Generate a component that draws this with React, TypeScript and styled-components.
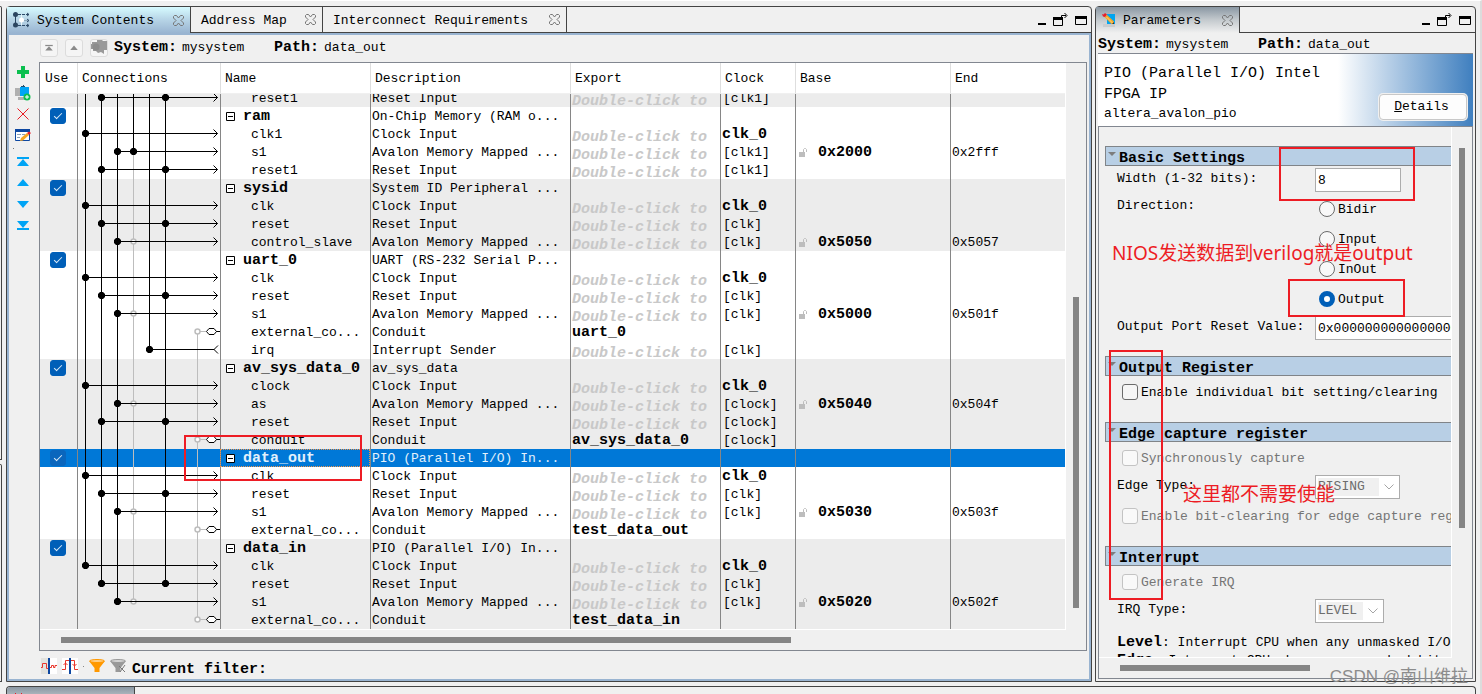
import React, { useLayoutEffect, useRef } from "react";
import styled, { createGlobalStyle, css } from "styled-components";

const mono = `"Liberation Mono", "Noto Sans CJK SC", monospace`;
const dark = "#444444";
const frame = "#828790";
const face = "#f0f0f0";

const GlobalStyle = createGlobalStyle`
  *, *::before, *::after { box-sizing: border-box; }
  body {
    margin: 0;
    background: ${face};
    color: #000;
    font: 13px/18px ${mono};
  }
  button, input, select { font: inherit; color: inherit; margin: 0; }
`;

/* ---------- shell ---------- */

const Page = styled.div`
  position: relative;
  display: flex;
  flex-direction: column;
  gap: 4px;
  height: 100vh;
  min-height: 480px;
  padding-top: 5px;
  overflow: hidden;
  border-top: 1px solid #fff;
  border-right: 2px solid #dcdcdc;
`;

const Workspace = styled.div`
  flex: 1;
  min-height: 0;
  display: grid;
  grid-template-columns: 2px minmax(0, 1fr) 381px;
  column-gap: 3px;
  padding-right: 4px;
`;

const Sliver = styled.div`
  display: flex;
  flex-direction: column;
  gap: 4px;
`;

const SliverPane = styled.div<{ $grow: number }>`
  flex: ${(p) => p.$grow};
  border: 1px solid ${dark};
  border-left: 0;
  border-top-right-radius: 2px;
`;

const Panel = styled.section<{ $lead?: boolean }>`
  display: flex;
  flex-direction: column;
  min-width: 0;
  min-height: 0;
  border: 1px solid ${dark};
  border-radius: 4px 4px 0 0;
  margin-left: ${(p) => (p.$lead ? "1px" : "0")};
`;

const TabStrip = styled.div`
  display: flex;
  flex: none;
  height: 26px;
`;

const TabItem = styled.div<{ $w: number; $tone?: "blue" | "gray" }>`
  display: flex;
  align-items: center;
  flex: none;
  width: ${(p) => p.$w}px;
  padding: 0 6px 0 ${(p) => (p.$tone ? 6 : 10)}px;
  border-right: 1px solid ${dark};
  ${(p) =>
    p.$tone === "blue"
      ? css`background: linear-gradient(#d6fbff, #b9d7e8 45%, #99b4d1);`
      : p.$tone === "gray"
      ? css`background: linear-gradient(#8a97a3, #c4cace 50%, ${face});`
      : css`border-bottom: 1px solid ${dark};`}
  svg { flex: none; }
`;

const TabLabel = styled.button`
  padding: 2px 0 0;
  border: 0;
  background: none;
  margin-left: 7px;
  white-space: nowrap;
  &:first-child { margin-left: 0; }
`;

const IconButton = styled.button`
  display: grid;
  place-items: center;
  padding: 0;
  border: 0;
  background: none;
`;

const TabClose = styled(IconButton)`
  margin-left: auto;
`;

const WindowControls = styled.div`
  flex: 1;
  display: flex;
  justify-content: flex-end;
  align-items: center;
  gap: 7px;
  padding-right: 4px;
  border-bottom: 1px solid ${dark};
`;

const PathBar = styled.div`
  display: flex;
  align-items: center;
  gap: 5px;
  white-space: nowrap;
`;

const Strong = styled.b`
  font-size: 15px;
  font-weight: 700;
`;

const PathValue = styled.span`
  min-width: 87px;
`;

/* ---------- system contents ---------- */

const ContentsBody = styled.div`
  flex: 1;
  min-height: 0;
  display: grid;
  grid-template: 27px minmax(0, 1fr) 28px / 30px minmax(0, 1fr);
  border: 2px solid #99b4d1;
  padding-right: 2px;
`;

const TopTools = styled.div`
  grid-column: 2;
  display: flex;
  align-items: center;
  gap: 7px;
  padding: 0 0 2px 1px;
`;

const ToolButton = styled(IconButton)`
  width: 18px;
  height: 18px;
  border: 1px solid #dcdcdc;
  border-radius: 3px;
  background: #f5f5f5;
`;

const ToolPath = styled(PathBar)`
  margin-left: -1px;
`;

const SideTools = styled.div`
  display: flex;
  flex-direction: column;
  align-items: center;
  gap: 5px;
  padding-top: 2px;
  padding-right: 2px;
  svg { display: block; }
`;

const SideDivider = styled.span`
  width: 1px;
  height: 1px;
  margin: 0 19px 0 0;
  background: #777;
`;

const TableFrame = styled.div`
  display: grid;
  grid-template: minmax(0, 1fr) 20px / minmax(0, 1fr) 20px;
  border: 1px solid ${frame};
`;

const TableView = styled.div`
  overflow: auto;
  scrollbar-width: none;
  border-right: 1px solid #fff;
  border-bottom: 1px solid #fff;
`;

const Table = styled.table`
  width: 100%;
  table-layout: fixed;
  border-collapse: separate;
  border-spacing: 0;
`;

const HeadCell = styled.th`
  position: sticky;
  top: 0;
  z-index: 1;
  height: 31px;
  padding: 2px 0 0 4px;
  background: #fff;
  border-left: 1px solid #dedede;
  border-bottom: 1px solid #f0f0f0;
  text-align: left;
  font-weight: 400;
  &:first-child { border-left: 0; padding-left: 5px; }
`;

const Row = styled.tr<{ $shade: boolean; $selected?: boolean }>`
  height: 18px;
  background: ${(p) => (p.$selected ? "#0078d7" : p.$shade ? "#ececec" : "#fff")};
  color: ${(p) => (p.$selected ? "#e3f1fc" : "#000")};
`;

const Cell = styled.td`
  height: 18px;
  padding: 2px 0 0 1px;
  border-left: 1px solid #868686;
  overflow: hidden;
  white-space: nowrap;
  line-height: 16px;
  svg { display: block; }
`;

const UseCell = styled(Cell)`
  border-left: 0;
  padding: 1px 0 1px 10px;
`;

const WireCell = styled(Cell)`
  padding: 0;
`;

const NameCell = styled(Cell)<{ $focus?: boolean }>`
  padding: 0;
  ${(p) => p.$focus && css`outline: 1px dotted #f0944a; outline-offset: -1px;`}
`;

const NameLine = styled.div<{ $child?: boolean }>`
  display: flex;
  align-items: center;
  gap: 7px;
  height: 18px;
  padding-top: 2px;
  padding-left: ${(p) => (p.$child ? 30 : 5)}px;
`;

const Expander = styled(IconButton)`
  width: 10px;
  height: 10px;
`;

const ExportHint = styled.i`
  display: block;
  height: 16px;
  padding-top: 3px;
  font-size: 15px;
  font-weight: 700;
  color: #c8c8c8;
`;

const StrongLine = styled(Strong)`
  display: block;
  height: 16px;
`;

const ClockText = styled.span`
  padding-left: 1px;
`;

const BaseLine = styled.div`
  display: flex;
  align-items: center;
  gap: 11px;
  height: 16px;
  padding-left: 2px;
  svg { margin-bottom: 2px; }
`;

const VScroll = styled.div<{ $top: number; $bottom: number }>`
  display: flex;
  justify-content: center;
  padding: ${(p) => p.$top}px 0 ${(p) => p.$bottom}px;
`;

const HScroll = styled.div<{ $left: number; $right: number }>`
  display: flex;
  align-items: center;
  padding: 0 ${(p) => p.$right}px 0 ${(p) => p.$left}px;
`;

const VThumb = styled.div`
  width: 6px;
  background: #858585;
`;

const HThumb = styled.div`
  height: 6px;
  width: 100%;
  background: #858585;
`;

const FilterBar = styled.div`
  grid-column: 1 / -1;
  display: flex;
  align-items: center;
  gap: 5px;
  padding: 2px 0 0 32px;
`;

const FilterDot = styled.span`
  width: 1px;
  height: 1px;
  background: #888;
`;

const FilterLabel = styled(Strong)`
  margin: 7px 0 0 1px;
`;

/* ---------- controls ---------- */

const CheckBox = styled.input.attrs({ type: "checkbox" })<{ $dim?: boolean }>`
  appearance: none;
  display: grid;
  place-items: center;
  flex: none;
  width: 16px;
  height: 16px;
  border: 1px solid #6b6b6b;
  border-radius: 3px;
  background: #f6f6f6;
  &:disabled { border-color: #c3c3c3; background: #f9f9f9; }
  &:checked {
    border-color: ${(p) => (p.$dim ? "#0a66bd" : "#005fb8")};
    background: ${(p) => (p.$dim ? "#0a66bd" : "#005fb8")};
  }
  &:checked::after {
    content: "";
    width: 8px;
    height: 4px;
    border: solid #dcebf8;
    border-width: 0 0 1px 1px;
    transform: translateY(-1px) rotate(-45deg);
  }
`;

const Radio = styled.input.attrs({ type: "radio" })`
  appearance: none;
  flex: none;
  width: 16px;
  height: 16px;
  border: 1px solid #6b6b6b;
  border-radius: 50%;
  background: #f8f8f8;
  &:checked { border: 5px solid #005fb8; background: #fff; }
`;

const TextBox = styled.input.attrs({ type: "text" })<{ $w: number }>`
  width: ${(p) => p.$w}px;
  height: 24px;
  padding: 0 2px;
  border: 1px solid #acacac;
  border-radius: 0;
  background: #fff;
`;

const SelectBox = styled.span<{ $w: number }>`
  display: flex;
  align-items: center;
  width: ${(p) => p.$w}px;
  height: 24px;
  padding: 2px 5px 2px 2px;
  border: 1px solid #acacac;
  background: #fff;
  svg { flex: none; margin-left: 5px; }
`;

const Select = styled.select`
  appearance: none;
  flex: 1;
  min-width: 0;
  height: 18px;
  padding: 0;
  border: 0;
  border-radius: 0;
  background: ${face};
  &:disabled { color: #6d6d6d; opacity: 1; }
`;

/* ---------- parameters ---------- */

const ParamsPathBar = styled(PathBar)`
  flex: none;
  height: 21px;
  margin: 0 2px;
  padding-top: 4px;
  border-bottom: 1px solid ${frame};
`;

const ParamsHeader = styled.header`
  flex: none;
  display: flex;
  justify-content: space-between;
  align-items: flex-end;
  height: 72px;
  margin: 0 2px;
  padding: 0 6px 3px;
  background: linear-gradient(to right, #fff 64%, #3f7fbf);
`;

const ParamsTitle = styled.h1`
  width: 220px;
  margin: 0;
  font-size: 15px;
  font-weight: 400;
  line-height: 21px;
`;

const DetailsButton = styled.button`
  width: 88px;
  height: 26px;
  margin-bottom: 3px;
  padding: 0 3px 0 0;
  border: 1px solid #c8c8c8;
  border-radius: 4px;
  background: #fdfdfd;
  box-shadow: 0 0 0 1px ${face};
`;

const ParamsPane = styled.div`
  flex: 1;
  min-height: 0;
  display: grid;
  grid-template: minmax(0, 1fr) 20px / minmax(0, 1fr) 20px;
  margin: 0 2px 2px;
  border: 1px solid ${frame};
`;

const ParamsView = styled.form`
  overflow: hidden;
  padding: 19px 0 0 6px;
  border-right: 1px solid #fff;
  border-bottom: 1px solid #fff;
`;

const Group = styled.section`
  min-width: 460px;
`;

const GroupHeader = styled.h2`
  display: flex;
  gap: 3px;
  height: 20px;
  margin: 0;
  padding: 5px 0 0 2px;
  border: 1px solid #808488;
  background: #b8cfe5;
  font-size: 15px;
  line-height: 14px;
`;

const GroupBody = styled.div`
  display: flex;
  flex-direction: column;
  gap: 3px;
  padding: 2px 0 16px 12px;
`;

const Field = styled.div`
  display: grid;
  grid-template-columns: 198px auto;
  justify-content: start;
  align-items: start;
`;

const FieldLabel = styled.label`
  padding-top: 2px;
`;

const RadioList = styled.div`
  display: flex;
  flex-direction: column;
  gap: 6px;
  padding: 2px 0 2px 4px;
`;

const Choice = styled.label<{ $off?: boolean }>`
  display: flex;
  align-items: center;
  gap: 3px;
  height: 24px;
  white-space: nowrap;
  color: ${(p) => (p.$off ? "#757575" : "#000")};
`;

const ChoiceText = styled.span`
  padding-top: 2px;
`;

const CheckChoice = styled(Choice)`
  height: 28px;
  padding-left: 5px;
`;

const Help = styled.p`
  margin: 8px 0 0;
  white-space: nowrap;
`;

/* ---------- annotations ---------- */

const MarkBox = styled.div<{ $x: number; $y: number; $w: number; $h: number }>`
  position: absolute;
  left: ${(p) => p.$x}px;
  top: ${(p) => p.$y}px;
  width: ${(p) => p.$w}px;
  height: ${(p) => p.$h}px;
  border: 2px solid #ed1c24;
  pointer-events: none;
`;

const MarkLayer = styled.div<{ $side: "left" | "right" }>`
  position: absolute;
  top: -1px;
  ${(p) => (p.$side === "left" ? "left: 0;" : "right: 0; width: 385px;")}
  height: 0;
`;

const MarkText = styled.div<{ $x: number; $y: number }>`
  position: absolute;
  left: ${(p) => p.$x}px;
  top: ${(p) => p.$y}px;
  color: #ed1c24;
  font: 19px/26px "Noto Sans", "Noto Sans CJK SC", sans-serif;
  white-space: nowrap;
`;

const Watermark = styled.div`
  position: absolute;
  right: 12px;
  bottom: 4px;
  color: #8c8c8c;
  font: 17px/26px "Liberation Sans", "Noto Sans CJK SC", sans-serif;
  white-space: nowrap;
`;

const Dock = styled.section`
  flex: none;
  height: 8px;
  margin: 0 4px 0 6px;
  overflow: hidden;
  border: 1px solid ${dark};
  border-bottom: 0;
  border-radius: 4px 4px 0 0;
`;

const DockTab = styled.div`
  width: 128px;
  height: 26px;
  padding: 5px 0 0 7px;
  border-right: 1px solid ${dark};
  background: linear-gradient(#8a97a3, #c4cace 50%, ${face});
  svg { display: block; }
`;

/* ---------- icons ---------- */

const CloseIcon = () => (
  <svg width="11" height="11" viewBox="0 0 11 11" fill="none" stroke="#757575">
    <path d="M1.5.5h2l2 2.500 2-2.500h2l1 1v1.500l-2.500 2.500 2.500 2.500v1.500l-1 1h-2l-2-2.500-2 2.500h-2l-1-1v-1.500l2.500-2.500-2.500-2.500v-1.500z" />
  </svg>
);

const SystemIcon = () => (
  <svg width="17" height="16" viewBox="0 0 17 16" fill="none">
    <path d="M2.500 3v10" stroke="#2b4560" />
    <path d="M5 2.500h11M5 13.500h11" stroke="#2e4a68" strokeDasharray="3 1" />
    <path d="M8.500 3v10" stroke="#e8f4f8" />
    <path d="M11 8.500h5" stroke="#8fa9bd" />
    <circle cx="2.500" cy="2.500" r="2.500" fill="#2b4560" />
    <circle cx="2.500" cy="13" r="2.500" fill="#2b4560" />
    <circle cx="8.500" cy="8" r="2.500" fill="#fff" />
    <path d="M14 1l2 1.500-2 1.500M14 7l2 1.500-2 1.500M14 12l2 1.500-2 1.500" stroke="#2e4a68" />
  </svg>
);

const ParamsIcon = () => (
  <svg width="14" height="15" viewBox="0 0 14 15">
    <path d="M5 1h8v10H5z" fill="#00a4ef" />
    <path d="M1 11h12v3H1z" fill="#c9ccce" />
    <path d="M2.500 4L5 2l7 6.500V11H9.500z" fill="#f7a823" />
    <path d="M4.500 4l6 6" stroke="#fbd08a" />
    <path d="M0 1l1.500.5L3 0l2 1.500L3 4 1 3.500z" fill="#e8202a" />
    <path d="M10 11l2-2v2z" fill="#333" />
  </svg>
);

const MinimizeIcon = () => (
  <svg width="8" height="14" viewBox="0 0 8 14"><path d="M0 10h8v2H0z" /></svg>
);

const FloatIcon = () => (
  <svg width="15" height="14" viewBox="0 0 15 14" fill="none" stroke="#000">
    <path d="M.5 4.500h9v8h-9z" />
    <path d="M0 5.500h10" strokeWidth="3" />
    <path d="M8.500 6V2.500H13M11.500 0l2.500 2.500L11.500 5" />
  </svg>
);

const MaximizeIcon = () => (
  <svg width="12" height="14" viewBox="0 0 12 14" fill="none" stroke="#000">
    <path d="M.5 3.500h11v8H.5z" />
    <path d="M0 4.500h12" strokeWidth="3" />
  </svg>
);

const TriIcon = ({ up, bar, color = "#00a4f5", small }: { up?: boolean; bar?: boolean; color?: string; small?: boolean }) => (
  <svg width={small ? 8 : 12} height={small ? 10 : 16} viewBox="0 0 12 16" fill={color}>
    <g transform={up ? undefined : "matrix(1 0 0 -1 0 16)"}>
      {bar && <path d="M0 3h12v2H0z" />}
      <path d={bar ? "M6 5l6 7H0z" : "M6 4l6 7H0z"} />
    </g>
  </svg>
);

const CopyIcon = () => (
  <svg width="16" height="15" viewBox="0 0 16 15" fill="#999">
    <path d="M1 2h5V0h5l1 1h4v9h-3v4l-3-2-3 1-2-2H2V9H0V4h1z" />
    <circle cx="5" cy="7" r="3.500" fill="#8c8c8c" />
  </svg>
);

const AddIcon = () => (
  <svg width="12" height="16" viewBox="0 0 12 16"><path d="M4 2h4v4h4v4H8v4H4v-4H0V6h4z" fill="#0bbf4f" /></svg>
);

const AddBlockIcon = () => (
  <svg width="16" height="16" viewBox="0 0 16 16">
    <path d="M0 3h5v8H0zM3 12h7v3H3z" fill="#b0b0b0" />
    <path d="M5 2h9v9H5z" fill="#00a4f5" />
    <path d="M6 2V1h2V0h1v1h1v1z" fill="#24506e" />
    <circle cx="12" cy="12" r="3.500" fill="#0bbf4f" />
    <path d="M10 12h4M12 10v4" stroke="#fff" />
  </svg>
);

const RemoveIcon = () => (
  <svg width="12" height="16" viewBox="0 0 12 16"><path d="M.5 2.500l11 11M11.500 2.500l-11 11" stroke="#e81c24" fill="none" /></svg>
);

const EditIcon = () => (
  <svg width="16" height="16" viewBox="0 0 16 16">
    <path d="M.5 2.500h14v11H.5z" fill="#fff" stroke="#0d47a1" />
    <path d="M0 2h15v3H0z" fill="#0d47a1" />
    <path d="M2 7.500h4M2 10.500h3M7 7.500h3" stroke="#8aa0b8" />
    <path d="M5 14l1-3 6-5 2 2-6 5.500z" fill="#f5a623" />
    <path d="M12 6l2-1.500L16 6l-2 2z" fill="#e8202a" />
  </svg>
);

const Wave1Icon = () => (
  <svg width="16" height="16" viewBox="0 0 16 16" fill="none">
    <path d="M0 0h7v16H0z" fill="#e2e2de" /><path d="M9 0h7v16H9z" fill="#fff" />
    <path d="M0 9.500h1.500v-4h4v5H7M9 9.500h1.500v-2h2v2H14v-2h2" stroke="#e8362c" />
    <path d="M7 0h2v16H7z" fill="#0d47a1" />
  </svg>
);

const Wave2Icon = () => (
  <svg width="16" height="16" viewBox="0 0 16 16" fill="none">
    <path d="M0 0h16v16H0z" fill="#fff" />
    <path d="M0 11.500h3.500v-9h9v9H16M1.500 7L3.500 5l2 2M10.500 6l2 2 2-2" stroke="#e8362c" />
    <path d="M7 0h2v16H7z" fill="#0d47a1" />
  </svg>
);

const FunnelIcon = ({ off }: { off?: boolean }) => (
  <svg width="16" height="16" viewBox="0 0 16 16">
    <path d="M0 3l5.500 7v4h5v-4L16 3z" fill={off ? "#999" : "#ff9800"} />
    <ellipse cx="8" cy="3" rx="7.500" ry="1.500" fill={off ? "#d5d5d5" : "#ffd08a"} stroke={off ? "#999" : "#ff9800"} />
    {off && <path d="M9 8l6 6M15 7l-5 7" stroke="#777" />}
  </svg>
);

const LockIcon = () => (
  <svg width="8" height="9" viewBox="0 0 8 9" fill="none">
    <path d="M0 4h6v5H0z" fill="#bdbdbd" />
    <path d="M4.500 4V1.500L5.500.5h1l1 1V4" stroke="#bdbdbd" />
  </svg>
);

const ChevronIcon = () => (
  <svg width="10" height="6" viewBox="0 0 10 6" fill="none" stroke="#a5a5a5"><path d="M.5.5L5 5 9.500.5" /></svg>
);

const DisclosureIcon = () => (
  <svg width="8" height="4" viewBox="0 0 8 4" fill="#7d7d7d"><path d="M0 0h8L4 4z" /></svg>
);

const MinusBox = () => (
  <svg width="10" height="10" viewBox="0 0 10 10"><path d="M.5.5h8v8h-8z" fill="#fff" stroke="#000" /><path d="M2 4.500h5" stroke="#000" /></svg>
);

/* ---------- table data ---------- */

const LANES = { clk: 7, rst: 23, bus: 39, bus2: 55, irq: 71, dbg: 87, ext: 119 };
type Lane = keyof typeof LANES;
type Wire = "clock" | "reset" | "bus" | "busBoth" | "conduit" | "irq";

type RowData = {
  name: string;
  desc: string;
  root?: boolean;
  shade?: boolean;
  selected?: boolean;
  wire?: Wire;
  export?: string;
  clock?: string;
  base?: string;
  end?: string;
};

const AV = "Avalon Memory Mapped ...";
const clk = (name: string): RowData => ({ name, desc: "Clock Input", wire: "clock", clock: "clk_0" });
const rst = (name: string, clock: string): RowData => ({ name, desc: "Reset Input", wire: "reset", clock });
const bus = (name: string, clock: string, base: string, end: string, wire: Wire = "bus"): RowData => ({
  name, desc: AV, wire, clock, base, end,
});
const conduit = (name: string, exp: string, clock?: string): RowData => ({
  name, desc: "Conduit", wire: "conduit", export: exp, clock,
});

const groups: RowData[][] = [
  [rst("reset1", "[clk1]")],
  [{ name: "ram", desc: "On-Chip Memory (RAM o...", root: true }, clk("clk1"), bus("s1", "[clk1]", "0x2000", "0x2fff", "busBoth"), rst("reset1", "[clk1]")],
  [{ name: "sysid", desc: "System ID Peripheral ...", root: true }, clk("clk"), rst("reset", "[clk]"), bus("control_slave", "[clk]", "0x5050", "0x5057")],
  [
    { name: "uart_0", desc: "UART (RS-232 Serial P...", root: true }, clk("clk"), rst("reset", "[clk]"),
    bus("s1", "[clk]", "0x5000", "0x501f"), conduit("external_co...", "uart_0"),
    { name: "irq", desc: "Interrupt Sender", wire: "irq", clock: "[clk]" },
  ],
  [
    { name: "av_sys_data_0", desc: "av_sys_data", root: true }, clk("clock"), bus("as", "[clock]", "0x5040", "0x504f"),
    rst("reset", "[clock]"), conduit("conduit", "av_sys_data_0", "[clock]"),
  ],
  [
    { name: "data_out", desc: "PIO (Parallel I/O) In...", root: true, selected: true }, clk("clk"), rst("reset", "[clk]"),
    bus("s1", "[clk]", "0x5030", "0x503f"), conduit("external_co...", "test_data_out"),
  ],
  [
    { name: "data_in", desc: "PIO (Parallel I/O) In...", root: true }, clk("clk"), rst("reset", "[clk]"),
    bus("s1", "[clk]", "0x5020", "0x502f"), conduit("external_co...", "test_data_in"),
  ],
];

const rows: RowData[] = groups.flatMap((g, i) => g.map((r) => ({ ...r, shade: i % 2 === 0 })));

// First and last row that each vertical lane reaches, with its colour.
const spans: { lane: Lane; from: number; to: number; color: string }[] = [
  { lane: "bus2", from: 3, to: 28, color: "#bdbdbd" },
  { lane: "bus2", from: -1, to: 3, color: "#000" },
  { lane: "ext", from: 13, to: 29, color: "#bdbdbd" },
  { lane: "clk", from: -1, to: 26, color: "#000" },
  { lane: "rst", from: -1, to: 27, color: "#000" },
  { lane: "bus", from: -1, to: 28, color: "#000" },
  { lane: "irq", from: -1, to: 14, color: "#000" },
  { lane: "dbg", from: -1, to: 27, color: "#000" },
];

const Node = ({ lane }: { lane: Lane }) => (
  <path d={`M${LANES[lane] - 1} 5h3l2 2v3l-2 2h-3l-2-2v-3z`} fill="#000" />
);
const OpenNode = ({ lane }: { lane: Lane }) => (
  <circle cx={LANES[lane] + 0.5} cy="8.5" r="2.5" fill="#fff" stroke="#bdbdbd" strokeWidth="1.5" />
);
const Arrow = ({ from }: { from: Lane }) => (
  <path d={`M${LANES[from]} 8.500H139.500M135.500 4.500l4 4-4 4`} fill="none" stroke="#000" />
);

const Wires = ({ index, wire }: { index: number; wire?: Wire }) => (
  <svg width="142" height="18" viewBox="0 0 142 18">
    {spans
      .filter((s) => index >= s.from && index <= s.to)
      .map((s) => (
        <path
          key={s.lane + s.color}
          d={`M${LANES[s.lane] + 0.5} ${index === s.from ? 8 : 0}V${index === s.to ? 9 : 18}`}
          stroke={s.color}
        />
      ))}
    {wire === "clock" && <><Arrow from="clk" /><Node lane="clk" /></>}
    {wire === "reset" && <><Arrow from="rst" /><Node lane="rst" /><Node lane="dbg" /></>}
    {wire === "bus" && <><OpenNode lane="bus2" /><Arrow from="bus" /><Node lane="bus" /></>}
    {wire === "busBoth" && <><Arrow from="bus" /><Node lane="bus" /><Node lane="bus2" /></>}
    {wire === "irq" && <><path d="M71 8.500H136.500M140 4.500l-4 4 4 4" fill="none" stroke="#000" /><Node lane="irq" /></>}
    {wire === "conduit" && (
      <>
        <path d="M122 8.500h6" stroke="#bdbdbd" />
        <OpenNode lane="ext" />
        <path d="M137 8.500h5" stroke="#000" />
        <path d="M128.500 8.500l2.500-3h5l2.500 3-2.500 3h-5z" fill="#fff" stroke="#000" />
      </>
    )}
  </svg>
);

const columns: [string, number | undefined][] = [
  ["Use", 37], ["Connections", 143], ["Name", 150], ["Description", 200],
  ["Export", 150], ["Clock", 75], ["Base", 155], ["End", undefined],
];

const SystemTable = () => {
  const view = useRef<HTMLDivElement>(null);
  useLayoutEffect(() => {
    if (view.current) view.current.scrollTop = 5;
  }, []);
  return (
    <TableView ref={view}>
      <Table>
        <colgroup>
          {columns.map(([label, w]) => <col key={label} width={w} />)}
        </colgroup>
        <thead>
          <tr>{columns.map(([label]) => <HeadCell key={label} scope="col">{label}</HeadCell>)}</tr>
        </thead>
        <tbody>
          {rows.map((r, i) => (
            <Row key={i} $shade={!!r.shade} $selected={r.selected}>
              <UseCell>{r.root && <CheckBox aria-label={`Use ${r.name}`} defaultChecked $dim={r.selected} />}</UseCell>
              <WireCell><Wires index={i} wire={r.wire} /></WireCell>
              <NameCell $focus={r.selected}>
                <NameLine $child={!r.root}>
                  {r.root ? (
                    <><Expander aria-label={`Collapse ${r.name}`}><MinusBox /></Expander><Strong>{r.name}</Strong></>
                  ) : r.name}
                </NameLine>
              </NameCell>
              <Cell>{r.desc}</Cell>
              <Cell>{r.export ? <StrongLine>{r.export}</StrongLine> : !r.root && <ExportHint>Double-click to</ExportHint>}</Cell>
              <Cell>{r.clock === "clk_0" ? <StrongLine>{r.clock}</StrongLine> : <ClockText>{r.clock}</ClockText>}</Cell>
              <Cell>{r.base && <BaseLine><LockIcon /><Strong>{r.base}</Strong></BaseLine>}</Cell>
              <Cell>{r.end}</Cell>
            </Row>
          ))}
        </tbody>
      </Table>
    </TableView>
  );
};

/* ---------- composition ---------- */

const Tab = ({ label, w, tone, icon }: { label: string; w: number; tone?: "blue" | "gray"; icon?: React.ReactNode }) => (
  <TabItem $w={w} $tone={tone}>
    {icon}
    <TabLabel>{label}</TabLabel>
    <TabClose aria-label={`Close ${label}`}><CloseIcon /></TabClose>
  </TabItem>
);

const Controls = () => (
  <WindowControls>
    <IconButton aria-label="Minimize"><MinimizeIcon /></IconButton>
    <IconButton aria-label="Float"><FloatIcon /></IconButton>
    <IconButton aria-label="Maximize"><MaximizeIcon /></IconButton>
  </WindowControls>
);

const PathText = () => (
  <>
    <Strong>System:</Strong><PathValue>mysystem</PathValue>
    <Strong>Path:</Strong><span>data_out</span>
  </>
);

const ParamGroup = ({ title, children }: { title: string; children: React.ReactNode }) => (
  <Group>
    <GroupHeader><DisclosureIcon />{title}</GroupHeader>
    <GroupBody>{children}</GroupBody>
  </Group>
);

const CheckField = ({ label, disabled }: { label: string; disabled?: boolean }) => (
  <CheckChoice $off={disabled}>
    <CheckBox disabled={disabled} />
    <ChoiceText>{label}</ChoiceText>
  </CheckChoice>
);

const SelectField = ({ id, label, value, w }: { id: string; label: string; value: string; w: number }) => (
  <Field>
    <FieldLabel htmlFor={id}>{label}</FieldLabel>
    <SelectBox $w={w}>
      <Select id={id} disabled defaultValue={value}><option>{value}</option></Select>
      <ChevronIcon />
    </SelectBox>
  </Field>
);

export default function App() {
  return (
    <Page>
      <GlobalStyle />
      <Workspace>
        <Sliver><SliverPane $grow={453} /><SliverPane $grow={217} /></Sliver>

        <Panel $lead>
          <TabStrip>
            <Tab label="System Contents" w={184} tone="blue" icon={<SystemIcon />} />
            <Tab label="Address Map" w={132} />
            <Tab label="Interconnect Requirements" w={244} />
            <Controls />
          </TabStrip>
          <ContentsBody>
            <TopTools>
              <ToolButton aria-label="Go to top"><TriIcon up bar small color="#8a8a8a" /></ToolButton>
              <ToolButton aria-label="Go up"><TriIcon up small color="#8a8a8a" /></ToolButton>
              <ToolButton aria-label="Drill in"><CopyIcon /></ToolButton>
              <ToolPath><PathText /></ToolPath>
            </TopTools>
            <SideTools>
              <IconButton aria-label="Add"><AddIcon /></IconButton>
              <IconButton aria-label="Duplicate"><AddBlockIcon /></IconButton>
              <IconButton aria-label="Remove"><RemoveIcon /></IconButton>
              <IconButton aria-label="Edit"><EditIcon /></IconButton>
              <SideDivider />
              <IconButton aria-label="Move to top"><TriIcon up bar /></IconButton>
              <IconButton aria-label="Move up"><TriIcon up /></IconButton>
              <IconButton aria-label="Move down"><TriIcon /></IconButton>
              <IconButton aria-label="Move to bottom"><TriIcon bar /></IconButton>
            </SideTools>
            <TableFrame>
              <SystemTable />
              <VScroll $top={234} $bottom={22}><VThumb /></VScroll>
              <HScroll $left={21} $right={275}><HThumb /></HScroll>
            </TableFrame>
            <FilterBar>
              <IconButton aria-label="Show clock domains"><Wave1Icon /></IconButton>
              <IconButton aria-label="Show reset domains"><Wave2Icon /></IconButton>
              <FilterDot />
              <IconButton aria-label="Filters"><FunnelIcon /></IconButton>
              <IconButton aria-label="Remove filter"><FunnelIcon off /></IconButton>
              <FilterLabel>Current filter:</FilterLabel>
            </FilterBar>
          </ContentsBody>
        </Panel>

        <Panel>
          <TabStrip>
            <Tab label="Parameters" w={144} tone="gray" icon={<ParamsIcon />} />
            <Controls />
          </TabStrip>
          <ParamsPathBar><PathText /></ParamsPathBar>
          <ParamsHeader>
            <div>
              <ParamsTitle>PIO (Parallel I/O) Intel FPGA IP</ParamsTitle>
              altera_avalon_pio
            </div>
            <DetailsButton><u>D</u>etails</DetailsButton>
          </ParamsHeader>
          <ParamsPane>
            <ParamsView>
              <ParamGroup title="Basic Settings">
                <Field>
                  <FieldLabel htmlFor="width">Width (1-32 bits):</FieldLabel>
                  <TextBox id="width" $w={86} defaultValue="8" />
                </Field>
                <Field role="radiogroup" aria-labelledby="direction">
                  <FieldLabel as="span" id="direction">Direction:</FieldLabel>
                  <RadioList>
                    {["Bidir", "Input", "InOut", "Output"].map((d) => (
                      <Choice key={d}>
                        <Radio name="direction" defaultChecked={d === "Output"} />
                        <ChoiceText>{d}</ChoiceText>
                      </Choice>
                    ))}
                  </RadioList>
                </Field>
                <Field>
                  <FieldLabel htmlFor="reset">Output Port Reset Value:</FieldLabel>
                  <TextBox id="reset" $w={200} defaultValue="0x0000000000000000" />
                </Field>
              </ParamGroup>
              <ParamGroup title="Output Register">
                <CheckField label="Enable individual bit setting/clearing" />
              </ParamGroup>
              <ParamGroup title="Edge capture register">
                <CheckField disabled label="Synchronously capture" />
                <SelectField id="edge" label="Edge Type:" value="RISING" w={85} />
                <CheckField disabled label="Enable bit-clearing for edge capture register" />
              </ParamGroup>
              <ParamGroup title="Interrupt">
                <CheckField disabled label="Generate IRQ" />
                <SelectField id="irq" label="IRQ Type:" value="LEVEL" w={69} />
                <Help>
                  <Strong>Level</Strong>: Interrupt CPU when any unmasked I/O
                  <br />
                  <Strong>Edge</Strong>: Interrupt CPU when any unmasked bit
                </Help>
              </ParamGroup>
            </ParamsView>
            <VScroll $top={21} $bottom={130}><VThumb /></VScroll>
            <HScroll $left={21} $right={142}><HThumb /></HScroll>
          </ParamsPane>
        </Panel>
      </Workspace>

      <Dock>
        <DockTab>
          <svg width="9" height="9" viewBox="0 0 9 9"><path d="M1 1l7 7M8 1L1 8" stroke="#e81c24" /></svg>
        </DockTab>
      </Dock>

      <MarkLayer $side="left">
        <MarkBox $x={184} $y={435} $w={178} $h={46} />
      </MarkLayer>
      <MarkLayer $side="right">
        <MarkBox $x={184} $y={147} $w={136} $h={54} />
        <MarkBox $x={193} $y={279} $w={117} $h={38} />
        <MarkBox $x={14} $y={350} $w={54} $h={250} />
        <MarkText $x={17} $y={240}>NIOS发送数据到verilog就是output</MarkText>
        <MarkText $x={88} $y={481}>这里都不需要使能</MarkText>
      </MarkLayer>
      <Watermark>CSDN @南山维拉</Watermark>
    </Page>
  );
}
